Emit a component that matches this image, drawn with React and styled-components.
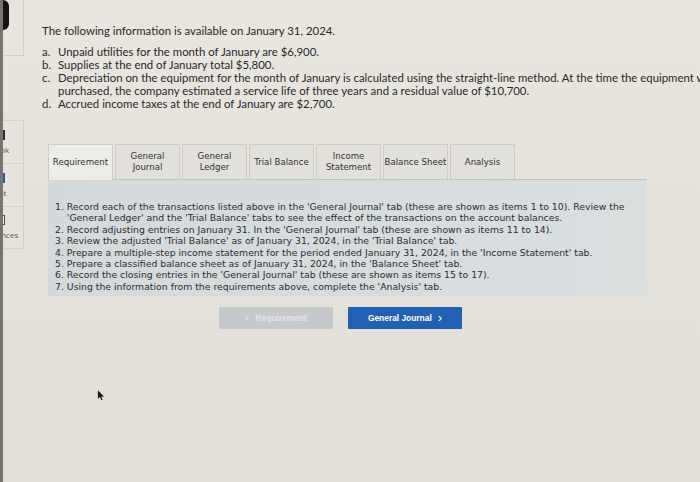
import React from 'react'
import styled, { createGlobalStyle } from 'styled-components'

const GlobalStyle = createGlobalStyle`
  html, body {
    margin: 0;
    padding: 0;
    width: 700px;
    height: 482px;
    overflow: hidden;
    background: #e5e2db;
  }
`

const tabs = [
  ['Requirement'],
  ['General', 'Journal'],
  ['General', 'Ledger'],
  ['Trial Balance'],
  ['Income', 'Statement'],
  ['Balance Sheet'],
  ['Analysis'],
]

const requirements = [
  "1. Record each of the transactions listed above in the 'General Journal' tab (these are shown as items 1 to 10). Review the",
  "    'General Ledger' and the 'Trial Balance' tabs to see the effect of the transactions on the account balances.",
  "2. Record adjusting entries on January 31. In the 'General Journal' tab (these are shown as items 11 to 14).",
  "3. Review the adjusted 'Trial Balance' as of January 31, 2024, in the 'Trial Balance' tab.",
  "4. Prepare a multiple-step income statement for the period ended January 31, 2024, in the 'Income Statement' tab.",
  "5. Prepare a classified balance sheet as of January 31, 2024, in the 'Balance Sheet' tab.",
  "6. Record the closing entries in the 'General Journal' tab (these are shown as items 15 to 17).",
  "7. Using the information from the requirements above, complete the 'Analysis' tab.",
]

function App() {
  return (
    <Page>
      <GlobalStyle />
      <Sidebar>
        <SideTop>
          <Blob />
        </SideTop>
        <SideGap />
        <SideItem>
          <SideIcon $color="#2b2f3a" />
          <SideLabel>eBook</SideLabel>
        </SideItem>
        <SideItem>
          <SideIcon $color="#2c5aa8" />
          <SideLabel>Print</SideLabel>
        </SideItem>
        <SideItem>
          <SideIcon $color="transparent" $outline />
          <SideLabel>References</SideLabel>
        </SideItem>
      </Sidebar>

      <Main>
        <Intro>The following information is available on January 31, 2024.</Intro>
        <List>
          <li><Letter>a.</Letter>Unpaid utilities for the month of January are $6,900.</li>
          <li><Letter>b.</Letter>Supplies at the end of January total $5,800.</li>
          <li>
            <Letter>c.</Letter>Depreciation on the equipment for the month of January is calculated using the straight-line method. At the time the equipment was
            <br />
            <Letter />purchased, the company estimated a service life of three years and a residual value of $10,700.
          </li>
          <li><Letter>d.</Letter>Accrued income taxes at the end of January are $2,700.</li>
        </List>

        <Tabs>
          {tabs.map((t, i) => (
            <Tab key={i} $active={i === 0}>
              {t.map((line, j) => <span key={j}>{line}</span>)}
            </Tab>
          ))}
        </Tabs>
        <Panel>
          {requirements.map((r, i) => <ReqLine key={i}>{r}</ReqLine>)}
        </Panel>

        <Buttons>
          <NavButton $disabled>
            <Chevron>&lsaquo;</Chevron> Requirement
          </NavButton>
          <NavButton>
            General Journal <Chevron>&rsaquo;</Chevron>
          </NavButton>
        </Buttons>
      </Main>

      <Cursor viewBox="0 0 8 12">
        <path d="M1 0 L1 10 L3.4 7.8 L5 11.5 L6.4 10.9 L4.8 7.3 L8 7.1 Z" fill="#1a1a1a" />
      </Cursor>
    </Page>
  )
}

export default App

const Page = styled.div`
  position: relative;
  display: flex;
  width: 700px;
  height: 482px;
  box-sizing: border-box;
  overflow: hidden;
  border-left: 3px solid #77756f;
  background: linear-gradient(180deg, #e9e6e0 0%, #e4e1da 60%, #e2dfd8 100%);
  font-family: Lato, "Open Sans", sans-serif;
  color: #2a2a2a;
`

const Sidebar = styled.div`
  width: 21px;
  min-width: 21px;
  flex-shrink: 0;
  overflow: hidden;
  display: flex;
  flex-direction: column;
`

const SideTop = styled.div`
  position: relative;
  height: 55px;
  flex-shrink: 0;
  border-right: 1px solid #d2cfc8;
  border-bottom: 1px solid #d2cfc8;
  background: #e8e5df;
`

const Blob = styled.div`
  position: absolute;
  left: -6px;
  top: 0;
  width: 12px;
  height: 30px;
  border-radius: 6px;
  background: #151515;
`

const SideGap = styled.div`
  height: 64px;
  flex-shrink: 0;
`

const SideItem = styled.div`
  height: 43px;
  width: 52px;
  margin-left: -31px;
  box-sizing: border-box;
  flex-shrink: 0;
  display: flex;
  flex-direction: column;
  align-items: center;
  justify-content: center;
  gap: 4px;
  border-top: 1px solid #d6d3cc;
  border-right: 1px solid #d2cfc8;
  background: #e6e3dd;
  &:last-child {
    border-bottom: 1px solid #d6d3cc;
  }
`

const SideIcon = styled.div`
  width: 10px;
  height: 10px;
  margin-left: 4px;
  background: ${p => p.$color};
  border: ${p => (p.$outline ? '1px solid #555' : 'none')};
  box-sizing: border-box;
`

const SideLabel = styled.div`
  white-space: nowrap;
  font-family: "Open Sans", sans-serif;
  font-size: 8px;
  color: #555;
`

const Main = styled.div`
  flex: 1;
  padding: 24px 0 0 18px;
  white-space: nowrap;
`

const Intro = styled.div`
  font-size: 11.4px;
  line-height: 14px;
`

const List = styled.ul`
  list-style: none;
  margin: 7px 0 0;
  padding: 0;
  font-size: 11.4px;
  line-height: 13px;
`

const Letter = styled.span`
  display: inline-block;
  width: 16px;
`

const Tabs = styled.div`
  display: flex;
  gap: 2px;
  margin: 34px 0 0 6px;
  height: 35px;
`

const Tab = styled.div`
  width: 65px;
  box-sizing: border-box;
  display: flex;
  flex-direction: column;
  align-items: center;
  justify-content: center;
  font-family: "DejaVu Sans", Verdana, sans-serif;
  font-size: 8.6px;
  line-height: 11px;
  color: #333;
  border: 1px solid #cfccc5;
  border-bottom: none;
  background: ${p => (p.$active ? '#edece8' : '#e2e0db')};
  margin-bottom: ${p => (p.$active ? '-1px' : '0')};
`

const Panel = styled.div`
  width: 599px;
  height: 117px;
  box-sizing: border-box;
  margin-left: 6px;
  padding: 21px 0 0 7px;
  background: linear-gradient(90deg, #d4d9dc 0%, #d7dcdf 60%, #d9dedf 100%);
  border-top: 1px solid #bfc3c4;
`

const ReqLine = styled.div`
  font-family: "DejaVu Sans", Verdana, sans-serif;
  font-size: 9.3px;
  line-height: 11.4px;
  color: #2e2e2e;
  white-space: pre;
`

const Buttons = styled.div`
  display: flex;
  gap: 15px;
  margin: 11px 0 0 177px;
`

const NavButton = styled.div`
  width: 114px;
  height: 22px;
  display: flex;
  align-items: center;
  justify-content: center;
  gap: 6px;
  font-family: "Liberation Sans", Arial, sans-serif;
  font-weight: 700;
  font-size: 8.4px;
  color: ${p => (p.$disabled ? '#e4e6e8' : '#ffffff')};
  background: ${p => (p.$disabled ? '#c6c9cc' : '#2160b5')};
  border-radius: 1px;
`

const Chevron = styled.span`
  font-size: 13px;
  font-weight: 400;
  line-height: 1;
  margin-top: -2px;
`

const Cursor = styled.svg`
  position: absolute;
  left: 94px;
  top: 390px;
  width: 7px;
  height: 11px;
`
